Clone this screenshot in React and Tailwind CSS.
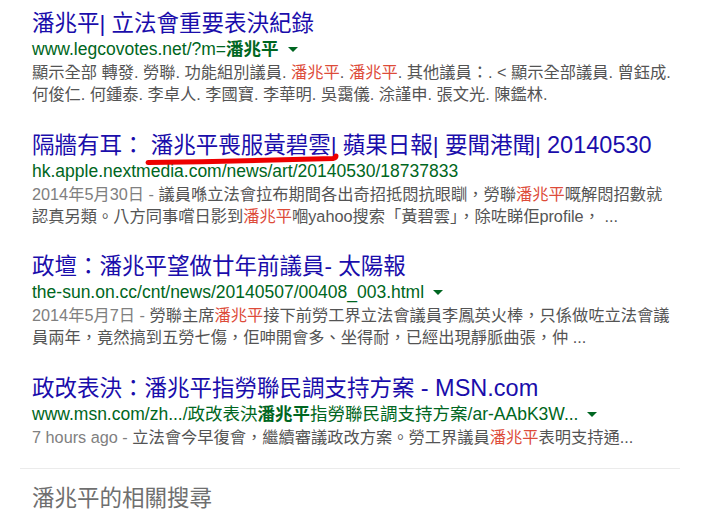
import React from "react";

const FONT = { fontFamily: "'Liberation Sans', 'Noto Sans CJK TC', sans-serif" };

function Arrow() {
  return (
    <svg className="inline-block ml-[9px] align-middle" width="10" height="6" viewBox="0 0 10 6">
      <path d="M0 0 L10 0 L5 5 Z" fill="#006621" />
    </svg>
  );
}

const R = ({ children }) => <span className="text-[#dd4b39]">{children}</span>;
const D = ({ children }) => <span className="text-[#808080]">{children}</span>;

function Result({ title, url, arrow, lines, first }) {
  return (
    <div className={first ? "" : "mt-[27px]"}>
      <div className="text-[22.5px] leading-[26px] text-[#1a0dab] whitespace-nowrap">{title}</div>
      <div className="text-[17.5px] leading-[24px] text-[#006621] whitespace-nowrap">
        {url}
        {arrow && <Arrow />}
      </div>
      {lines.map((l, i) => (
        <div key={i} className="text-[16.25px] leading-[22px] text-[#545454] whitespace-nowrap">
          {l}
        </div>
      ))}
    </div>
  );
}

export default function App() {
  return (
    <div className="relative w-[715px] h-[517px] bg-white overflow-hidden" style={FONT}>
      <div className="pt-[11px] pl-[32px]">
        <Result
          first
          title="潘兆平| 立法會重要表決紀錄"
          url={<>www.legcovotes.net/?m=<b>潘兆平</b></>}
          arrow
          lines={[
            <>顯示全部 轉發. 勞聯. 功能組別議員. <R>潘兆平</R>. <R>潘兆平</R>. 其他議員：. &lt; 顯示全部議員. 曾鈺成.</>,
            <>何俊仁. 何鍾泰. 李卓人. 李國寶. 李華明. 吳靄儀. 涂謹申. 張文光. 陳鑑林.</>,
          ]}
        />
        <Result
          title={<>隔牆有耳：&nbsp;潘兆平喪服黃碧雲| 蘋果日報| 要聞港聞| <span className="text-[23.5px]">20140530</span></>}
          url="hk.apple.nextmedia.com/news/art/20140530/18737833"
          lines={[
            <><D>2014年5月30日 - </D>議員喺立法會拉布期間各出奇招抵悶抗眼瞓，勞聯<R>潘兆平</R>嘅解悶招數就</>,
            <>認真另類。八方同事嚐日影到<R>潘兆平</R>嗰yahoo搜索「黃碧雲」，除咗睇佢profile， ...</>,
          ]}
        />
        <Result
          title="政壇：潘兆平望做廿年前議員- 太陽報"
          url="the-sun.on.cc/cnt/news/20140507/00408_003.html"
          arrow
          lines={[
            <><D>2014年5月7日 - </D>勞聯主席<R>潘兆平</R>接下前勞工界立法會議員李鳳英火棒，只係做咗立法會議</>,
            <>員兩年，竟然搞到五勞七傷，佢呻開會多、坐得耐，已經出現靜脈曲張，仲 ...</>,
          ]}
        />
        <Result
          title={<>政改表決：潘兆平指勞聯民調支持方案 <span className="text-[23.5px]">- MSN.com</span></>}
          url={<>www.msn.com/zh.../政改表決<b>潘兆平</b>指勞聯民調支持方案/ar-AAbK3W...</>}
          arrow
          lines={[<><D>7 hours ago - </D>立法會今早復會，繼續審議政改方案。勞工界議員<R>潘兆平</R>表明支持通...</>]}
        />
      </div>
      <div className="ml-[20px] w-[660px] h-px bg-[#ebebeb] mt-[20px]" />
      <div className="pl-[32px] mt-[16px] text-[22.5px] leading-[28px] text-[#6f6f6f] whitespace-nowrap">
        潘兆平的相關搜尋
      </div>
      <svg className="absolute left-0 top-0 pointer-events-none" width="715" height="517">
        <path
          d="M148 162.5 Q 240 161 333 158.5 Q 336 158 336 156"
          stroke="#ee0000"
          strokeWidth="5"
          fill="none"
          strokeLinecap="round"
        />
      </svg>
    </div>
  );
}
